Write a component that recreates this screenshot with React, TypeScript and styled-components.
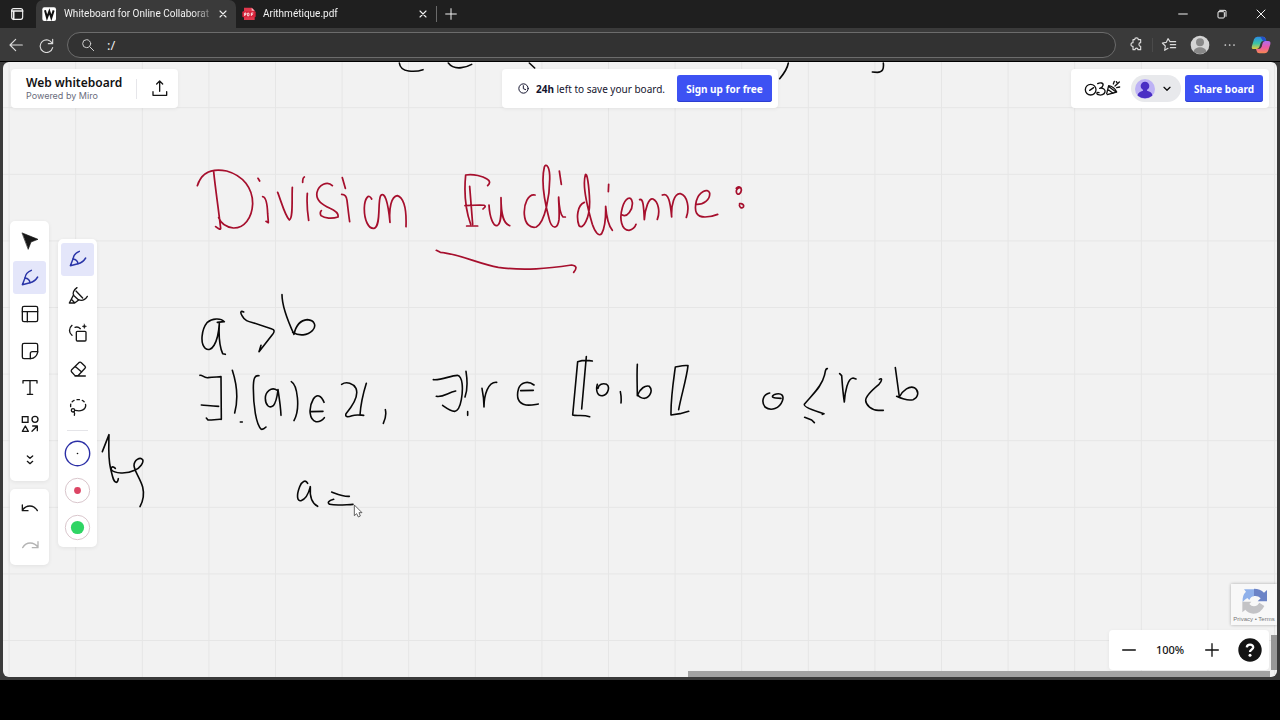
import React from 'react';
import styled, { createGlobalStyle } from 'styled-components';

const GlobalStyle = createGlobalStyle`
  *, *::before, *::after { box-sizing: border-box; }
  body { margin: 0; background: #000; font-family: "Noto Sans", "Open Sans", sans-serif; }
  button, input { font: inherit; color: inherit; }
  button { border: 0; padding: 0; background: none; cursor: pointer; }
  svg { display: block; flex: none; }
`;

const BrowserWindow = styled.div`
  display: flex;
  flex-direction: column;
  height: calc(100vh - 40px);
  background: #3a3a3a;
  color: #f2f2f2;
`;

const TabStrip = styled.div`
  display: flex;
  height: 28px;
  background: #1f1f1f;
`;

const ChromeButton = styled.button<{ $width: number }>`
  display: flex;
  align-items: center;
  justify-content: center;
  flex: none;
  width: ${(p) => p.$width}px;
  height: 28px;
`;

const Tab = styled.div<{ $active?: boolean }>`
  display: flex;
  align-items: center;
  width: 200px;
  height: 28px;
  padding-left: 6px;
  gap: 7px;
  border-radius: 7px 7px 0 0;
  background: ${(p) => (p.$active ? '#3a3a3a' : 'transparent')};
`;

const TabTitle = styled.span`
  flex: 1;
  white-space: nowrap;
  font-family: Roboto, sans-serif;
  font-size: 10px;
  line-height: 16px;
  mask-image: linear-gradient(to right, #000 88%, rgba(0, 0, 0, 0.3));
`;

const TabClose = styled(ChromeButton)`
  margin-left: -7px;
`;

const Separator = styled.span<{ $color: string; $height: number }>`
  flex: none;
  align-self: center;
  width: 1px;
  height: ${(p) => p.$height}px;
  background: ${(p) => p.$color};
`;

const WindowControls = styled.div`
  display: flex;
  margin-left: auto;
`;

const NavBar = styled.div`
  display: flex;
  align-items: center;
  height: 34px;
  padding: 0 3px 0 1px;
  border-bottom: 1px solid #000;
`;

const AddressBar = styled.label`
  display: flex;
  flex: 1;
  align-items: center;
  height: 26px;
  margin: 0 6px;
  padding: 0 13px;
  gap: 12px;
  border: 1px solid #6c6c6c;
  border-radius: 13px;
  background: #323232;
`;

const AddressInput = styled.input`
  flex: 1;
  min-width: 0;
  padding: 0;
  border: 0;
  outline: 0;
  background: none;
  font-family: "Open Sans", sans-serif;
  font-size: 13px;
  line-height: 16px;
`;

const Board = styled.main`
  position: relative;
  display: flex;
  flex: 1;
  flex-direction: column;
  min-height: 0;
  margin: 0 3px 3px;
  overflow: hidden;
  border-radius: 6px;
  background: #f2f2f2;
  color: #111;
`;

const Canvas = styled.svg`
  position: absolute;
  inset: 0;
  width: 100%;
  height: 100%;
`;

const TopRow = styled.div`
  position: relative;
  display: grid;
  grid-template-columns: 1fr auto 1fr;
  padding: 7px 8px 0;
`;

const Card = styled.div`
  display: flex;
  align-items: center;
  height: 39px;
  border-radius: 4px;
  background: #fff;
  box-shadow: 0 1px 4px rgba(0, 0, 0, 0.06);
`;

const BrandCard = styled(Card)`
  justify-self: start;
  padding: 0 2px 0 15px;
`;

const Brand = styled.div`
  width: 110px;
`;

const BrandName = styled.div`
  font-family: "Noto Sans", sans-serif;
  font-size: 12px;
  font-weight: 600;
  line-height: 14px;
  white-space: nowrap;
`;

const BrandNote = styled.div`
  font-family: Inter, sans-serif;
  font-size: 9px;
  line-height: 12px;
  color: #6a6c7c;
  white-space: nowrap;
`;

const TrialCard = styled(Card)`
  padding: 0 6px 0 16px;
  gap: 7px;
`;

const TrialText = styled.span`
  margin-right: 5px;
  font-size: 10px;
  line-height: 16px;
  color: #14142e;
`;

const PrimaryButton = styled.button<{ $width: number }>`
  width: ${(p) => p.$width}px;
  height: 27px;
  border-radius: 3px;
  background: #3d52f3;
  box-shadow: inset 0 -1px 0 #2c3ed0;
  color: #fff;
  font-size: 10px;
  font-weight: 700;
  line-height: 16px;
  white-space: nowrap;
`;

const ShareCard = styled(Card)`
  justify-self: end;
  padding: 0 6px 0 13px;
  gap: 4px;
`;

const UserPill = styled.button`
  display: flex;
  align-items: center;
  width: 50px;
  height: 27px;
  margin-left: 6px;
  padding-left: 4px;
  gap: 7px;
  border-radius: 14px;
  background: #e8e9ec;
`;

const Workspace = styled.div`
  position: relative;
  display: flex;
  flex: 1;
  justify-content: space-between;
  min-height: 0;
`;

const Docks = styled.div`
  display: flex;
  align-items: center;
  padding-left: 7px;
  gap: 9px;
`;

const DockColumn = styled.div`
  display: flex;
  flex-direction: column;
  gap: 8px;
`;

const Dock = styled.div<{ $height?: number; $pad?: string }>`
  display: flex;
  flex-direction: column;
  justify-content: space-between;
  align-items: center;
  width: 39px;
  min-height: ${(p) => p.$height ?? 0}px;
  padding: ${(p) => p.$pad ?? '3px'};
  border-radius: 5px;
  background: #fff;
  box-shadow: 0 1px 4px rgba(0, 0, 0, 0.07);
`;

const ToolButton = styled.button<{ $active?: boolean }>`
  display: flex;
  align-items: center;
  justify-content: center;
  width: 33px;
  height: 33px;
  border-radius: 3px;
  background: ${(p) => (p.$active ? '#e4e6fa' : 'transparent')};
  color: ${(p) => (p.$active ? '#2a35a8' : '#161616')};
`;

const ExportButton = styled(ToolButton)`
  margin-left: 6px;
`;

const DockDivider = styled.span`
  width: 21px;
  height: 1px;
  margin: 2px 0;
  background: #e4e4e8;
`;

const Corner = styled.div`
  display: flex;
  flex-direction: column;
  align-items: flex-end;
  justify-content: flex-end;
  gap: 5px;
  padding-bottom: 7px;
`;

const Captcha = styled.div`
  display: flex;
  flex-direction: column;
  align-items: center;
  width: 46px;
  height: 41px;
  padding-top: 3px;
  background: #f8f8f8;
  box-shadow: 0 0 3px rgba(0, 0, 0, 0.3);
`;

const CaptchaNote = styled.span`
  font-family: "Liberation Sans", sans-serif;
  font-size: 6px;
  line-height: 8px;
  color: #777;
  white-space: nowrap;
`;

const ZoomCard = styled(Card)`
  height: 40px;
  margin-right: 8px;
  padding: 0 6px;
`;

const ZoomLevel = styled.span`
  width: 56px;
  font-size: 11px;
  font-weight: 500;
  line-height: 16px;
  text-align: center;
`;

const ZoomButton = styled.button`
  display: flex;
  align-items: center;
  justify-content: center;
  width: 27px;
  height: 27px;
`;

const HelpButton = styled(ZoomButton)`
  margin-left: 11px;
`;

const ScrollX = styled.div`
  position: absolute;
  right: 7px;
  bottom: 0;
  width: 582px;
  height: 6px;
  background: #a3a3a3;
`;

const ScrollY = styled.div`
  position: absolute;
  right: 0;
  bottom: 7px;
  width: 6px;
  height: 35px;
  background: #979797;
`;

type GlyphProps = {
  box: string;
  w: number;
  h?: number;
  sw?: number;
  color?: string;
  children: React.ReactNode;
};

/* Line icon drawn on a grid of three units per pixel. */
const Glyph = ({ box, w, h = w, sw = 4, color = 'currentColor', children }: GlyphProps) => (
  <svg
    width={w}
    height={h}
    viewBox={box}
    fill="none"
    stroke={color}
    strokeWidth={sw}
    strokeLinecap="round"
    strokeLinejoin="round"
    aria-hidden="true"
  >
    {children}
  </svg>
);

const PenGlyph = () => (
  <Glyph box="54 151 72 72" w={24} sw={4.4}>
    <path d="M94 164C84 168 76 177 75 187L67 207L90 201C100 199 108 192 113 184" />
    <path d="M75 187C83 188 89 193 90 201" />
  </Glyph>
);

const mainTools: { label: string; active?: boolean; icon: React.ReactNode }[] = [
  {
    label: 'Select',
    icon: (
      <Glyph box="54 41 72 72" w={24} sw={2}>
        <path fill="currentColor" d="M67 53L114 72L93 80L85 101Z" />
      </Glyph>
    ),
  },
  { label: 'Pen', active: true, icon: <PenGlyph /> },
  {
    label: 'Templates',
    icon: (
      <Glyph box="54 261 72 72" w={24}>
        <rect x="67" y="274" width="46" height="46" rx="5" />
        <path d="M67 290H113M82 290V320" />
      </Glyph>
    ),
  },
  {
    label: 'Sticky note',
    icon: (
      <Glyph box="54 371 72 72" w={24}>
        <path d="M72 384H108Q113 384 113 389V411Q109 428 92 430H72Q67 430 67 425V389Q67 384 72 384Z" />
        <path d="M113 409H97Q91 409 91 415V430" />
      </Glyph>
    ),
  },
  {
    label: 'Text',
    icon: (
      <Glyph box="54 0 72 72" w={24}>
        <path d="M69 24V17H111V24M90 17V58M82 58H98" />
      </Glyph>
    ),
  },
  {
    label: 'Shapes',
    icon: (
      <Glyph box="54 111 72 72" w={24}>
        <rect x="67" y="125" width="17" height="17" strokeLinejoin="miter" />
        <circle cx="105" cy="133" r="9" />
        <path d="M76 153L85 169H67ZM96 169L112 153M98 153H112V167" />
      </Glyph>
    ),
  },
  {
    label: 'More tools',
    icon: (
      <Glyph box="54 219 72 72" w={24}>
        <path d="M82 243L90 250L98 243M82 259L90 266L98 259" />
      </Glyph>
    ),
  },
];

const penTools: { label: string; active?: boolean; icon: React.ReactNode }[] = [
  { label: 'Pen tool', active: true, icon: <PenGlyph /> },
  {
    label: 'Highlighter',
    icon: (
      <Glyph box="196 208 72 72" w={24}>
        <path d="M229 219C219 226 214 236 220 243L233 255C244 260 254 254 260 245" />
        <path d="M226 229L246 250M218 242L206 265H222L234 256M212 254L222 264" />
      </Glyph>
    ),
  },
  {
    label: 'Smart drawing',
    icon: (
      <Glyph box="196 319 72 72" w={24}>
        <rect x="227" y="350" width="29" height="29" rx="3" />
        <path d="M214 332C204 341 204 354 214 362M223 338C228 336 234 337 239 342" />
        <path fill="currentColor" strokeWidth="1" d="M251 328L253 333L258 335L253 337L251 342L249 337L244 335L249 333Z" />
      </Glyph>
    ),
  },
  {
    label: 'Eraser',
    icon: (
      <Glyph box="196 429 72 72" w={24}>
        <path d="M213 464L236 442Q239 440 242 443L253 454Q256 457 253 460L232 482H223L213 471Q210 468 213 464ZM223 454L243 471M223 483H254" />
      </Glyph>
    ),
  },
  {
    label: 'Lasso',
    icon: (
      <Glyph box="196 57 72 72" w={24}>
        <path strokeDasharray="7 9" d="M210 92C208 76 222 70 234 71C246 71 254 78 255 88" />
        <path d="M255 90C254 102 240 107 224 103" />
        <circle cx="217" cy="103" r="5" />
        <path d="M220 108C223 111 222 115 221 118" />
      </Glyph>
    ),
  },
];

const swatches = [
  { label: 'Black, thin', ring: '#2b2fa6', ringWidth: 1.4, dot: '#111', r: 0.8 },
  { label: 'Red, medium', ring: '#d9c6cc', ringWidth: 1, dot: '#dc4564', r: 3.4 },
  { label: 'Green, thick', ring: '#d9c6cc', ringWidth: 1, dot: '#2fd564', r: 6.6 },
];

/* Handwriting strokes: one group per phrase, placed at its origin on the board. */
const ink: { x: number; y: number; red?: boolean; d: string }[] = [
  {
    x: 380,
    y: 55,
    d: 'M58 24C60 40 70 46 86 48C102 50 118 48 129 44M205 24C214 36 228 40 244 38C258 36 268 32 275 28M448 24L464 39M1225 24C1222 42 1210 58 1199 71M1510 24C1512 42 1508 52 1492 52L1477 51',
  },
  {
    x: 190,
    y: 155,
    red: true,
    d: 'M22 92C36 48 68 40 110 48C160 62 188 100 188 146C186 190 162 220 130 219C108 216 92 204 86 188M71 50C76 100 84 150 92 220C92 224 88 224 77 215M204 70L209 78M218 125C228 126 232 150 233 176C234 190 235 200 235 203L228 199M263 112C274 140 284 180 298 195C310 190 305 130 307 97M338 82C338 74 338 68 343 66M352 115C350 140 352 170 356 196M427 92C412 76 386 90 381 112C376 138 400 150 420 160C438 168 446 178 444 186C426 192 404 190 393 182C390 176 391 170 394 167M457 68L466 100M455 118C464 118 470 126 471 136C474 160 476 180 479 200M545 132C536 114 524 130 523 158C522 196 536 222 552 220C574 214 562 140 572 122C584 108 594 140 600 202C596 160 604 124 622 122C640 128 650 160 648 215',
  },
  {
    x: 425,
    y: 155,
    red: true,
    d: 'M137 208C120 160 118 100 122 60C146 56 174 64 186 72C196 78 196 84 188 92M134 94L143 208M125 213H158M120 152L164 150C176 150 182 150 180 156L174 162M192 150C194 190 206 214 216 212C232 206 228 160 228 128C228 170 232 204 254 212M330 120C310 116 296 146 298 178C300 208 316 220 334 216C360 202 376 120 374 60C372 30 362 26 358 36C350 70 356 130 372 190C380 224 398 224 402 194C404 160 400 140 401 126C402 150 406 178 414 186L421 186M403 48L409 88M478 142C456 150 454 190 462 212C474 226 494 190 494 140C492 90 486 50 481 60C472 90 488 160 502 208C510 232 522 246 530 236C544 210 542 170 542 154C544 180 548 208 562 226M551 88L550 110M592 180C606 188 624 164 622 142C618 118 600 130 592 158C582 192 590 226 612 226C622 224 630 218 633 208M644 134C654 130 656 150 658 194C660 160 672 126 684 132C700 140 706 170 697 193M712 120C730 112 736 140 740 186C738 150 748 114 766 116C788 122 794 160 784 187M812 148C836 150 856 134 854 114C848 98 822 110 814 138C806 172 816 186 840 186C856 186 868 182 878 178M934 100C940 92 950 96 949 106C948 116 938 122 935 114C932 106 936 100 944 98M944 146C952 144 958 150 955 156C950 162 944 158 943 150M34 286L46 292C100 296 160 326 220 337C300 348 370 340 440 330C456 332 456 340 446 352',
  },
  {
    x: 190,
    y: 285,
    d: 'M103 110C92 98 66 100 52 112C34 134 30 176 46 190C64 204 84 176 88 116C86 150 88 184 98 206L106 208M82 112L102 110M161 81C152 76 150 82 156 92C164 108 176 110 192 114L246 132C254 134 254 140 248 148L207 200L213 181M276 29C276 60 290 100 312 148C318 120 330 106 352 104C374 106 380 122 368 136C352 152 328 154 308 142',
  },
  {
    x: 190,
    y: 285,
    d: 'M30 271C36 268 42 280 54 278C70 276 84 276 93 275L94 403C80 402 66 406 54 405L49 399M34 360C48 360 60 364 86 364M127 256C138 290 146 340 134 384M151 411L157 411M207 272C194 270 190 280 190 310C190 360 198 420 214 433C220 434 224 430 228 426M262 316C244 304 226 320 226 340C226 360 238 372 250 362C260 350 262 330 264 314C268 340 272 366 273 391M304 290C322 300 332 370 312 407M402 352C394 330 380 326 370 342C354 370 358 404 378 410C390 412 398 404 403 398M363 380L399 379M455 298C470 288 490 296 498 310C506 330 490 360 468 386C464 398 476 396 486 392C498 388 508 390 521 391M529 295C518 330 512 360 510 390M586 374C590 390 586 402 580 415',
  },
  {
    x: 420,
    y: 345,
    d: 'M40 104C66 106 90 92 112 91C128 94 130 130 124 164C120 186 112 198 104 199C90 198 78 188 68 181M49 154C70 158 84 142 107 138M138 79C142 104 142 136 135 156M143 200V211M186 130C190 150 192 170 192 186C192 150 204 110 230 112M342 120C324 106 302 112 296 130C288 156 294 176 318 180C334 182 346 178 355 177M302 137L340 136M499 35L485 192M517 48C498 44 486 46 473 50L458 210C470 214 488 208 509 215M532 118C526 140 534 154 548 152C566 148 570 124 560 118C548 114 536 118 534 130M601 140C604 154 604 164 603 174M652 58C650 90 652 124 652 152C660 130 676 120 688 124C700 136 690 156 674 160C664 160 656 154 652 148M776 194C784 150 800 100 804 62C790 60 778 64 766 66C760 110 752 160 753 210L780 206L806 199',
  },
  {
    x: 745,
    y: 355,
    d: 'M74 114C54 118 48 140 60 156C78 170 104 160 112 138C118 122 110 114 94 117C80 120 78 128 92 129L108 130M247 41C240 40 242 50 238 62C230 96 200 120 178 148C176 156 204 166 237 176L232 178M179 187L200 195L208 203M284 56L290 62C292 90 294 116 298 141C300 110 308 70 324 69L333 72M403 73C412 68 412 76 402 88C380 106 362 124 362 136C362 150 380 166 400 166L415 166M451 38L463 126C474 104 494 92 508 98C524 108 520 128 504 134C490 138 472 132 455 124',
  },
  {
    x: 285,
    y: 470,
    d: 'M68 40C62 28 50 34 44 50C34 76 36 94 48 92C62 88 72 66 76 50C74 76 80 100 98 109M140 66C156 72 172 80 193 79M146 88C130 92 126 98 134 103C156 108 180 104 204 103',
  },
  {
    x: 0,
    y: 375,
    d: 'M307 230L327 179C326 220 324 250 332 282C338 306 340 320 348 322C354 322 354 316 355 311M346 280C338 272 332 276 334 284C342 296 380 298 404 286C420 280 432 262 428 254C420 244 402 256 402 272C404 290 420 310 428 336C434 360 428 380 420 395',
  },
];

const Whiteboard = () => (
  <Canvas role="img" aria-label="Division Euclidienne">
    <defs>
      <pattern id="grid" x="5.6" y="45.2" width="66.6" height="66.6" patternUnits="userSpaceOnUse">
        <path d="M0.5 0V66.6M0 0.5H66.6" stroke="#e6e6e6" strokeWidth="1" fill="none" />
      </pattern>
    </defs>
    <rect width="100%" height="100%" fill="url(#grid)" />
    <g transform="translate(-3 -62)">
      {ink.map((s, i) => (
        <path
          key={i}
          transform={`translate(${s.x} ${s.y}) scale(0.33333)`}
          d={s.d}
          fill="none"
          stroke={s.red ? '#a60f2d' : '#080808'}
          strokeWidth={s.red ? 5.2 : 4.8}
          strokeLinecap="round"
          strokeLinejoin="round"
        />
      ))}
      <path
        transform="translate(285 470) scale(0.33333)"
        d="M208 105V137L215 131L220 141L226 138L222 128H231Z"
        fill="#fff"
        stroke="#444"
        strokeWidth="2.5"
      />
    </g>
  </Canvas>
);

export default function App() {
  return (
    <>
      <GlobalStyle />
      <BrowserWindow>
        <TabStrip>
          <ChromeButton $width={36} aria-label="Tab actions">
            <Glyph box="32 20 42 42" w={14} sw={3.4}>
              <rect x="34" y="25" width="33" height="32" rx="6" />
              <path d="M34 32H67M40 32V57" strokeWidth="5" />
            </Glyph>
          </ChromeButton>
          <Tab $active>
            <svg width="15" height="14" viewBox="127 19 45 42" aria-hidden="true">
              <rect x="128" y="20" width="41" height="41" rx="6" fill="#fff" />
              <path d="M136 29L142 51L149 32L155 51L162 29" fill="none" stroke="#111" strokeWidth="6" />
            </svg>
            <TabTitle>Whiteboard for Online Collaborat</TabTitle>
            <TabClose $width={26} aria-label="Close Whiteboard tab">
              <Glyph box="660 30 24 24" w={8} sw={3.4}>
                <path d="M663 33L681 51M681 33L663 51" />
              </Glyph>
            </TabClose>
          </Tab>
          <Tab>
            <svg width="14" height="14" viewBox="725 20 42 42" aria-hidden="true">
              <path d="M731 22H754L763 31V59H731Z" fill="#e0374c" />
              <rect x="726" y="33" width="40" height="18" rx="3" fill="#d8233b" />
              <path d="M754 22V31H763" fill="#f7b3bb" />
              <path d="M733 47V38H737V43H733M742 38V47H745Q748 42 745 38ZM753 47V38H759M753 42H758" fill="none" stroke="#fff" strokeWidth="2.4" />
            </svg>
            <TabTitle>Arithmétique.pdf</TabTitle>
            <TabClose $width={26} aria-label="Close Arithmétique tab">
              <Glyph box="660 30 24 24" w={8} sw={3.4}>
                <path d="M663 33L681 51M681 33L663 51" />
              </Glyph>
            </TabClose>
          </Tab>
          <Separator $color="#6a6a6a" $height={16} />
          <ChromeButton $width={28} aria-label="New tab">
            <Glyph box="1333 22 36 36" w={12} sw={3}>
              <path d="M1335 40H1367M1351 24V56" />
            </Glyph>
          </ChromeButton>
          <WindowControls>
            <ChromeButton $width={39} aria-label="Minimize">
              <Glyph box="413 24 36 36" w={12} sw={3}>
                <path d="M418 42H444" />
              </Glyph>
            </ChromeButton>
            <ChromeButton $width={39} aria-label="Restore">
              <Glyph box="529 25 36 36" w={12} sw={3}>
                <rect x="535" y="36" width="19" height="19" rx="3" />
                <path d="M540 32H556Q559 32 559 35V50" />
              </Glyph>
            </ChromeButton>
            <ChromeButton $width={39} aria-label="Close window">
              <Glyph box="645 25 36 36" w={12} sw={3}>
                <path d="M651 31L675 55M675 31L651 55" />
              </Glyph>
            </ChromeButton>
          </WindowControls>
        </TabStrip>

        <NavBar>
          <ChromeButton $width={30} aria-label="Back">
            <Glyph box="26 110 48 48" w={16} sw={3.4} color="#dcdcdc">
              <path d="M69 134H32M49 117L32 134L49 151" />
            </Glyph>
          </ChromeButton>
          <ChromeButton $width={30} aria-label="Reload">
            <Glyph box="114 110 48 48" w={16} sw={3.4} color="#dcdcdc">
              <path d="M157 130A19 19 0 1 0 158 142M158 117V130H145" />
            </Glyph>
          </ChromeButton>
          <AddressBar>
            <Glyph box="245 115 42 42" w={14} sw={3} color="#cfcfcf">
              <circle cx="262" cy="132" r="12" />
              <path d="M271 141L283 153" />
            </Glyph>
            <AddressInput aria-label="Address" defaultValue=":/" />
          </AddressBar>
          <ChromeButton $width={30} aria-label="Extensions">
            <Glyph box="269 113 48 48" w={16} sw={3.4} color="#dcdcdc">
              <path d="M281 121H286C286 114 297 114 297 121H304V130C297 130 297 141 304 141V151H296C296 145 287 145 287 151H281V141C273 142 273 130 281 130Z" />
            </Glyph>
          </ChromeButton>
          <Separator $color="#4a4a4a" $height={14} />
          <ChromeButton $width={32} aria-label="Favorites">
            <Glyph box="366 112 48 48" w={16} sw={3.4} color="#dcdcdc">
              <path d="M403 126H393L387 117L382 128L370 130L379 139L377 152L387 146M394 135H410M394 144H410M403 126H410" />
            </Glyph>
          </ChromeButton>
          <ChromeButton $width={30} aria-label="Profile">
            <svg width="20" height="20" viewBox="450 106 60 60" aria-hidden="true">
              <circle cx="480" cy="136" r="28" fill="#d4d4d4" />
              <circle cx="480" cy="128" r="12" fill="#888" />
              <path d="M461 156C462 138 498 138 499 156Q480 170 461 156Z" fill="#888" />
            </svg>
          </ChromeButton>
          <ChromeButton $width={30} aria-label="Settings and more">
            <svg width="14" height="14" viewBox="549 115 42 42" fill="#dcdcdc" aria-hidden="true">
              <circle cx="556" cy="136" r="2.6" />
              <circle cx="569" cy="136" r="2.6" />
              <circle cx="582" cy="136" r="2.6" />
            </svg>
          </ChromeButton>
          <ChromeButton $width={32} aria-label="Copilot">
            <svg width="20" height="20" viewBox="636 106 60 60" aria-hidden="true">
              <defs>
                <linearGradient id="copilotLeft" x1="0" y1="0" x2="0" y2="1">
                  <stop offset="0" stopColor="#2b8be8" />
                  <stop offset="0.55" stopColor="#3cc3a4" />
                  <stop offset="1" stopColor="#e6c93a" />
                </linearGradient>
                <linearGradient id="copilotRight" x1="0" y1="0" x2="0" y2="1">
                  <stop offset="0" stopColor="#b06cf0" />
                  <stop offset="0.5" stopColor="#ec5aa8" />
                  <stop offset="1" stopColor="#f5884e" />
                </linearGradient>
              </defs>
              <path d="M655 111H672Q678 111 680 118L682 124H672Q667 124 665 130L661 142Q659 148 652 148H644Q636 148 639 138L645 119Q648 111 655 111Z" fill="url(#copilotLeft)" />
              <path d="M677 161H661Q654 161 653 154L651 148H660Q666 147 668 141L671 130Q673 124 679 124H687Q696 124 694 134L688 152Q685 161 677 161Z" fill="url(#copilotRight)" />
              <path d="M664 111H672Q678 111 680 118L682 124H672Z" fill="#2650c8" />
            </svg>
          </ChromeButton>
        </NavBar>

        <Board>
          <Whiteboard />
          <TopRow>
            <BrandCard>
              <Brand>
                <BrandName>Web whiteboard</BrandName>
                <BrandNote>Powered by Miro</BrandNote>
              </Brand>
              <Separator $color="#e6e6ea" $height={20} />
              <ExportButton aria-label="Export board">
                <Glyph box="451 239 60 60" w={20}>
                  <path d="M460 277V288H501V277M480 276V246M471 254L480 245L489 254" />
                </Glyph>
              </ExportButton>
            </BrandCard>

            <TrialCard>
              <Glyph box="413 85 33 33" w={11} sw={3} color="#14142e">
                <circle cx="429.500" cy="101.500" r="14" />
                <path d="M429 93V102L436 105" />
              </Glyph>
              <TrialText>
                <b>24h</b> left to save your board.
              </TrialText>
              <PrimaryButton $width={95}>Sign up for free</PrimaryButton>
            </TrialCard>

            <ShareCard>
              <Glyph box="133 240 111 54" w={37} h={18} sw={4}>
                <circle cx="153" cy="269" r="16" />
                <path d="M150 271L162 263M174 251C182 246 192 249 190 256C189 261 184 264 180 265C190 263 198 269 196 276C194 284 184 287 176 284C168 281 172 275 178 278" />
                <path d="M201 281L207 257C216 258 228 266 231 276L203 284M204 268L220 280M208 260L229 276M221 252L224 244M226 258L239 246M231 263L240 261M230 245L232 248" />
              </Glyph>
              <UserPill aria-label="Account menu">
                <svg width="20" height="20" viewBox="285 235 60 60" aria-hidden="true">
                  <circle cx="315" cy="265" r="30" fill="#bdb2f5" />
                  <circle cx="315" cy="256" r="13" fill="#4a2fc4" />
                  <path d="M309 262H321V270C334 273 337 279 337 285Q315 300 293 285C293 279 297 273 309 270Z" fill="#4a2fc4" />
                </svg>
                <Glyph box="367 250 30 30" w={10}>
                  <path d="M373 260L382 269L391 260" />
                </Glyph>
              </UserPill>
              <PrimaryButton $width={78}>Share board</PrimaryButton>
            </ShareCard>
          </TopRow>

          <Workspace>
            <Docks>
              <DockColumn>
                <Dock $height={260} $pad="4px 3px">
                  {mainTools.map((t) => (
                    <ToolButton key={t.label} $active={t.active} aria-label={t.label}>
                      {t.icon}
                    </ToolButton>
                  ))}
                </Dock>
                <Dock $height={76}>
                  <ToolButton aria-label="Undo">
                    <Glyph box="54 364 72 72" w={24}>
                      <path d="M67 391V408H84M67 407C78 390 101 389 112 408" />
                    </Glyph>
                  </ToolButton>
                  <ToolButton aria-label="Redo">
                    <Glyph box="54 474 72 72" w={24} color="#b4b4b4">
                      <path d="M114 500V518H97M114 517C102 500 79 499 68 518" />
                    </Glyph>
                  </ToolButton>
                </Dock>
              </DockColumn>
              <Dock $height={308} $pad="4px 3px 3px">
                {penTools.map((t) => (
                  <ToolButton key={t.label} $active={t.active} aria-label={t.label}>
                    {t.icon}
                  </ToolButton>
                ))}
                <DockDivider />
                {swatches.map((s) => (
                  <ToolButton key={s.label} aria-label={s.label}>
                    <svg width="27" height="27" viewBox="0 0 27 27" aria-hidden="true">
                      <circle cx="13.500" cy="13.500" r="12.200" fill="none" stroke={s.ring} strokeWidth={s.ringWidth} />
                      <circle cx="13.500" cy="13.500" r={s.r} fill={s.dot} />
                    </svg>
                  </ToolButton>
                ))}
              </Dock>
            </Docks>

            <Corner>
              <Captcha>
                <svg width="28" height="28" viewBox="450 51 84 84" aria-hidden="true">
                  <path d="M531 60V94H503L512 85Q504 76 492 78V56Q511 56 522 68Z" fill="#6b83c6" />
                  <path d="M462 58H492V79Q482 80 478 90L472 84Q464 88 458 96Q456 76 468 65Z" fill="#8fb0ea" />
                  <path d="M457 95H484L478 102Q488 113 502 106L508 98L523 108Q512 131 490 131Q474 129 466 119L457 127Z" fill="#c3c3c6" />
                </svg>
                <CaptchaNote>Privacy • Terms</CaptchaNote>
              </Captcha>
              <ZoomCard>
                <ZoomButton aria-label="Zoom out">
                  <Glyph box="97 219 42 42" w={14}>
                    <path d="M99 240H137" />
                  </Glyph>
                </ZoomButton>
                <ZoomLevel>100%</ZoomLevel>
                <ZoomButton aria-label="Zoom in">
                  <Glyph box="347 219 42 42" w={14}>
                    <path d="M349 240H387M368 221V259" />
                  </Glyph>
                </ZoomButton>
                <HelpButton aria-label="Help">
                  <svg width="24" height="24" viewBox="0 0 24 24" aria-hidden="true">
                    <circle cx="12" cy="12" r="11.700" fill="#141414" />
                    <path d="M8.800 9.400C9 5.600 15.400 5.800 15.200 9.400C15 11.600 12 11.600 12 14" fill="none" stroke="#fff" strokeWidth="2.300" />
                    <circle cx="12" cy="17.200" r="1.500" fill="#fff" />
                  </svg>
                </HelpButton>
              </ZoomCard>
            </Corner>
          </Workspace>
          <ScrollX />
          <ScrollY />
        </Board>
      </BrowserWindow>
    </>
  );
}
